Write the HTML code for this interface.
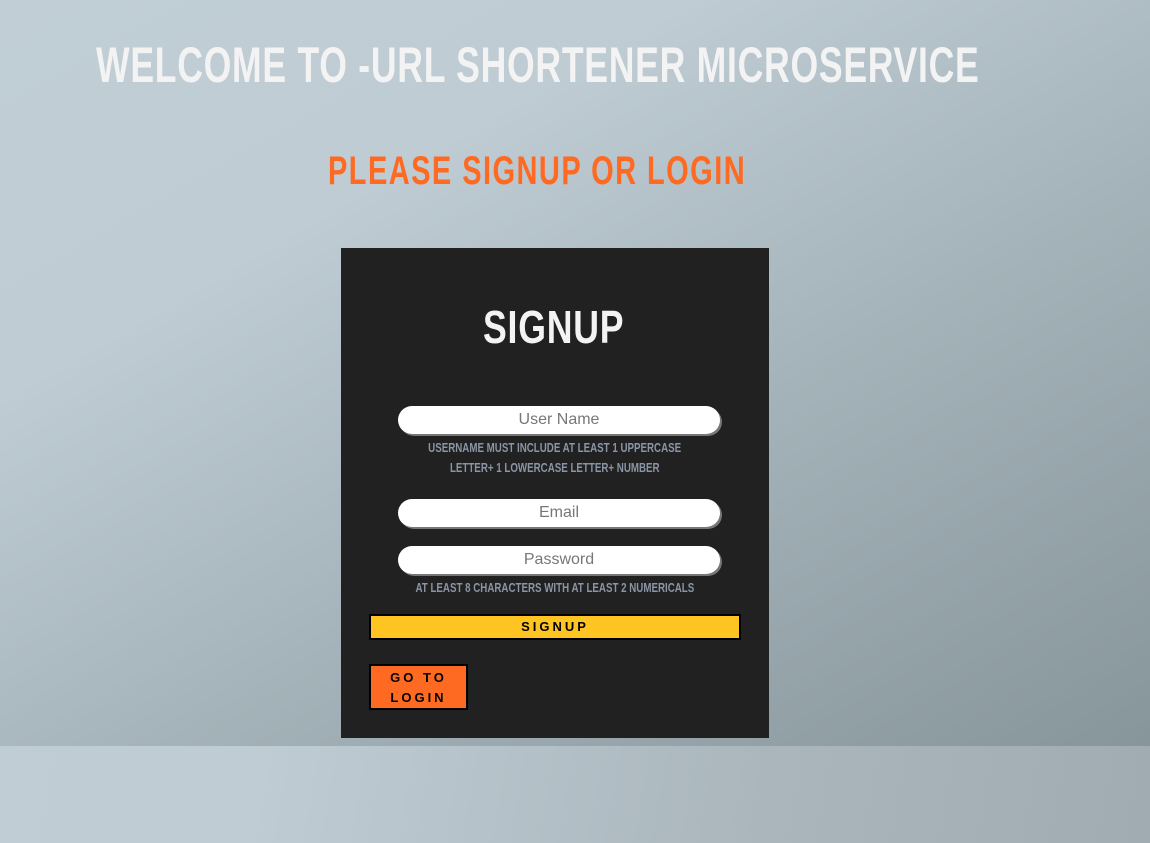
<!DOCTYPE html>
<html><head><meta charset="utf-8"><style>
*{margin:0;padding:0;box-sizing:border-box}
body{width:1150px;height:843px;overflow:hidden;position:relative;font-family:"Liberation Sans",sans-serif;background:linear-gradient(100deg,#c0cdd5 0%,#bfccd4 30%,#aab6bc 70%,#a0acb2 100%)}
.top{position:absolute;left:0;top:0;width:1150px;height:746px;background:linear-gradient(150deg,#c1ced6 0%,#bfccd4 28%,#a4b2b9 60%,#87969b 100%)}
.t{position:absolute;white-space:nowrap;font-weight:bold;transform-origin:left top;line-height:1}
.card{position:absolute;left:341px;top:248px;width:428px;height:490px;background:#212121}
.inp{position:absolute;left:398px;width:322px;height:28px;background:#fff;border-radius:14px;box-shadow:2px 2px 0 #777;color:#777;font-size:16px;text-align:center;line-height:28px}
.hint{position:absolute;left:341px;width:428px;text-align:center;color:#8a95a5;font-weight:bold;font-size:13px;line-height:20px}
.hint span{display:inline-block;transform:scaleX(.75)}
</style></head><body>
<div class="top"></div>
<div class="t" style="left:96px;top:40px;font-size:50px;color:#f3f3f3;letter-spacing:1px;transform:scaleX(.712)">WELCOME TO -URL SHORTENER MICROSERVICE</div>
<div class="t" style="left:328px;top:151px;font-size:40px;color:#ff6a22;letter-spacing:2px;transform:scaleX(.725)">PLEASE SIGNUP OR LOGIN</div>
<div class="card"></div>
<div class="t" style="left:483px;top:304px;font-size:46px;color:#f3f3f3;letter-spacing:1px;transform:scaleX(.775)">SIGNUP</div>
<div class="inp" style="top:406px">User Name</div>
<div class="hint" style="top:438px"><span>USERNAME MUST INCLUDE AT LEAST 1 UPPERCASE</span><br><span>LETTER+ 1 LOWERCASE LETTER+ NUMBER</span></div>
<div class="inp" style="top:499px">Email</div>
<div class="inp" style="top:546px">Password</div>
<div class="hint" style="top:578px"><span>AT LEAST 8 CHARACTERS WITH AT LEAST 2 NUMERICALS</span></div>
<div style="position:absolute;left:369px;top:614px;width:372px;height:26px;background:#fec421;border:2px solid #000;text-align:center;font-weight:bold;font-size:13px;letter-spacing:3px;line-height:22px;color:#000">SIGNUP</div>
<div style="position:absolute;left:369px;top:664px;width:99px;height:46px;background:#ff6a22;border:2px solid #000;text-align:center;font-weight:bold;font-size:13px;letter-spacing:3px;line-height:20px;color:#000;padding-top:2px">GO TO<br>LOGIN</div>
</body></html>
